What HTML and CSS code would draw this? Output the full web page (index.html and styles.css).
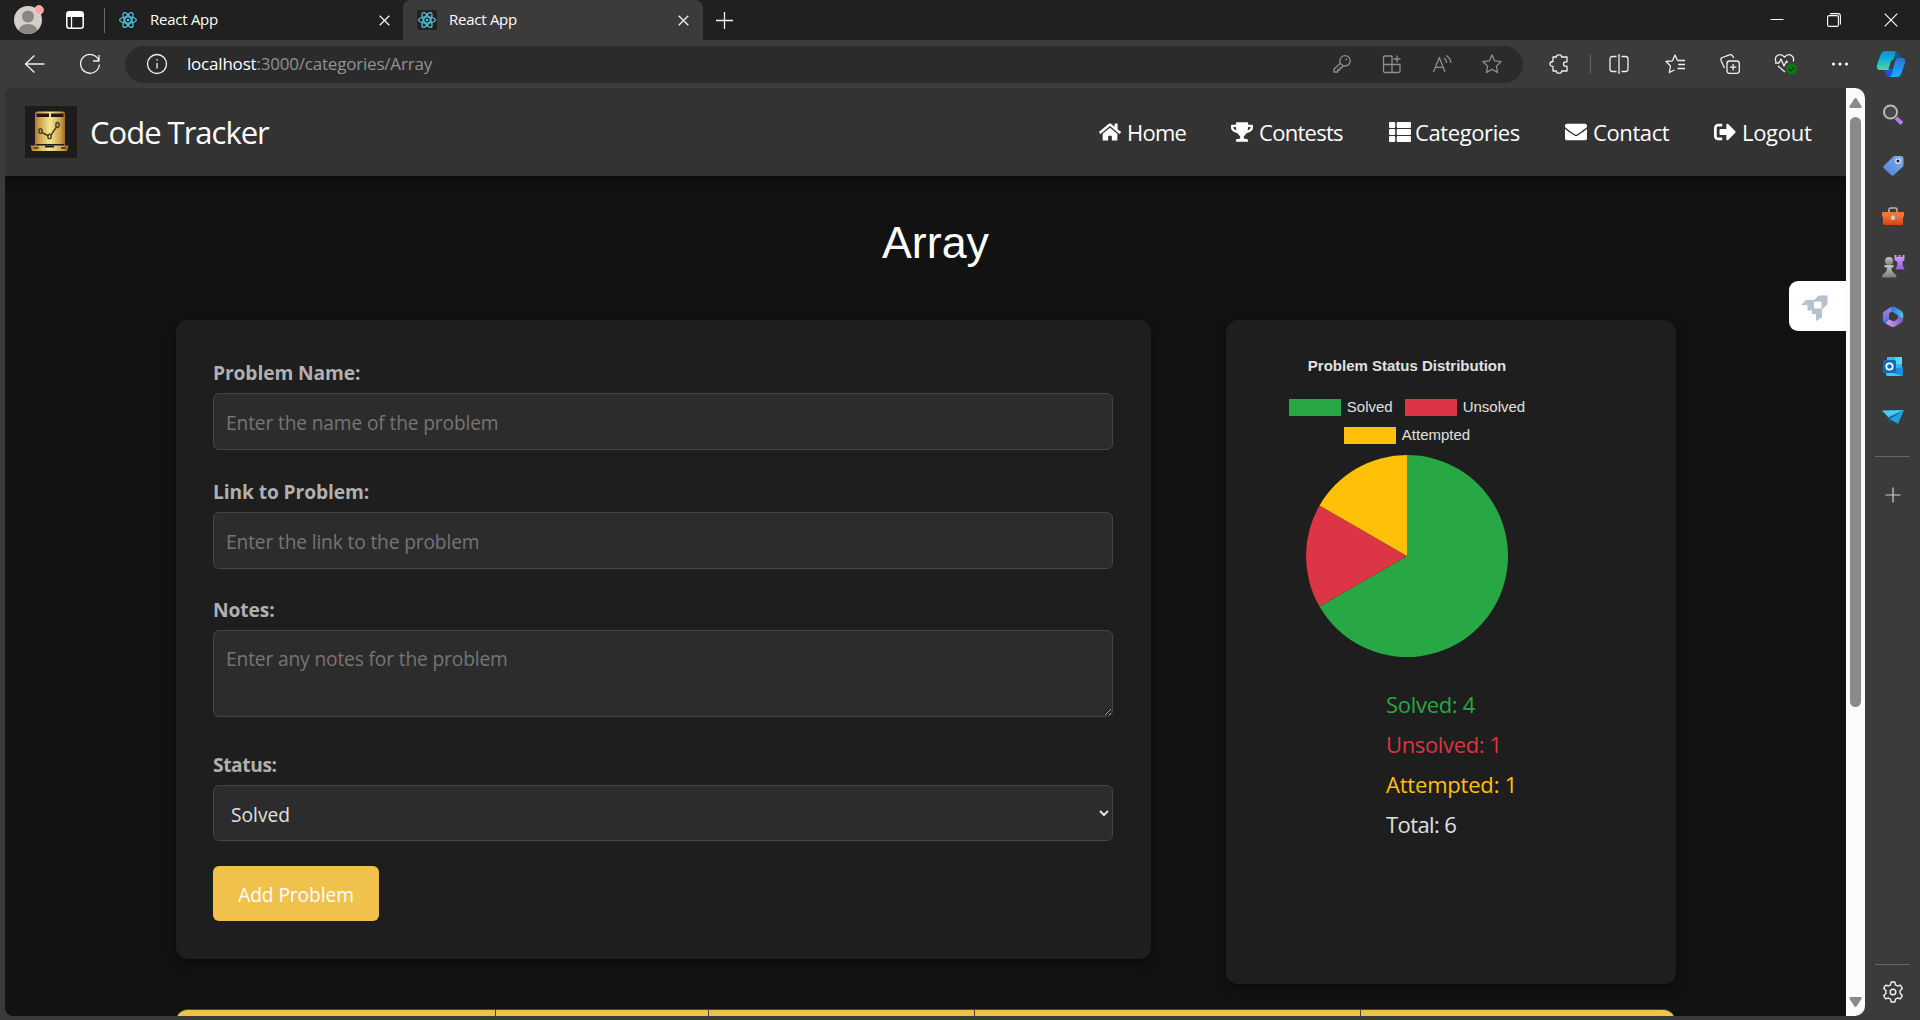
FILE: index.html
```html
<!DOCTYPE html>
<html lang="en">
<head>
<meta charset="utf-8">
<title>React App</title>
<link rel="stylesheet" href="styles.css">
</head>
<body>
<svg width="0" height="0" class="defs" aria-hidden="true">
  <defs>
    <linearGradient id="gold" x1="0" x2="1"><stop offset="0" stop-color="#a8782f"/><stop offset=".12" stop-color="#c99a45"/><stop offset=".5" stop-color="#f3e793"/><stop offset=".85" stop-color="#cfa04a"/><stop offset="1" stop-color="#9a6a26"/></linearGradient>
    <linearGradient id="cpA" x1="0" y1="0" x2="0" y2="1"><stop offset="0" stop-color="#0a8fd0"/><stop offset=".5" stop-color="#14b4d6"/><stop offset="1" stop-color="#5fd68b"/></linearGradient>
    <linearGradient id="cpB" x1="0" y1="0" x2="0" y2="1"><stop offset="0" stop-color="#2870d8"/><stop offset="1" stop-color="#12b4fb"/></linearGradient>
    <linearGradient id="tag" x1="1" y1="0" x2="0" y2="1"><stop offset="0" stop-color="#7fb0f3"/><stop offset="1" stop-color="#4f7fd9"/></linearGradient>
    <linearGradient id="box" x1="0" y1="0" x2="0" y2="1"><stop offset="0" stop-color="#f4743a"/><stop offset="1" stop-color="#d8420c"/></linearGradient>
    <linearGradient id="grey" x1="0" y1="0" x2="0" y2="1"><stop offset="0" stop-color="#c4c4c4"/><stop offset="1" stop-color="#7c7c7c"/></linearGradient>
    <linearGradient id="rook" x1="0" y1="0" x2="0" y2="1"><stop offset="0" stop-color="#d3a2fb"/><stop offset="1" stop-color="#8f5fd0"/></linearGradient>
    <linearGradient id="mA" x1="0" y1="0" x2="0" y2="1"><stop offset="0" stop-color="#b57ee6"/><stop offset="1" stop-color="#3b6fe0"/></linearGradient>
    <linearGradient id="mB" x1="0" y1="0" x2="1" y2="1"><stop offset="0" stop-color="#2b6ed6"/><stop offset="1" stop-color="#52d4f8"/></linearGradient>
    <linearGradient id="mC" x1="0" y1="0" x2="1" y2="0"><stop offset="0" stop-color="#d9a0f2"/><stop offset="1" stop-color="#7a55c8"/></linearGradient>
    <g id="react" fill="none" stroke="#53c1de" stroke-width="1.3"><circle cx="10" cy="10" r="1.3" fill="#53c1de" stroke="none"/><ellipse cx="10" cy="10" rx="8.4" ry="3.2"/><ellipse cx="10" cy="10" rx="8.4" ry="3.2" transform="rotate(60 10 10)"/><ellipse cx="10" cy="10" rx="8.4" ry="3.2" transform="rotate(120 10 10)"/></g>
  </defs>
</svg>

<div class="titlebar">
  <svg class="avatar" width="32" height="32" viewBox="0 0 32 32"><clipPath id="av"><circle cx="16" cy="16" r="14"/></clipPath><g clip-path="url(#av)"><rect width="32" height="32" fill="#d2cfcb"/><circle cx="16" cy="12.500" r="6" fill="#8b8682"/><ellipse cx="16" cy="27" rx="9.500" ry="7" fill="#8b8682"/></g><circle cx="27" cy="6" r="4.400" fill="#ffa3a3" stroke="#e9dcd9" stroke-width=".8"/></svg>
  <svg class="workspace" width="18" height="18" viewBox="0 0 18 18"><rect x=".8" y=".8" width="16.400" height="16.400" rx="2.500" fill="none" stroke="#fff" stroke-width="1.500"/><path d="M1 3q0-2 2-2h12q2 0 2 2v3H1z" fill="#fff"/><path d="M5.500 6v11" stroke="#fff" stroke-width="1.300"/></svg>
  <span class="title-divider"></span>
  <div class="tab">
    <svg width="20" height="20" viewBox="0 0 20 20"><use href="#react"/></svg>
    <span class="tab-name">React App</span>
    <svg width="11" height="11" viewBox="0 0 11 11"><path d="M.7.7l9.600 9.600M10.300.7L.7 10.300" stroke="#f2f2f2" stroke-width="1.300"/></svg>
  </div>
  <div class="tab tab-active">
    <svg width="20" height="20" viewBox="0 0 20 20"><rect width="20" height="20" rx="2" fill="#222"/><use href="#react"/></svg>
    <span class="tab-name">React App</span>
    <svg width="11" height="11" viewBox="0 0 11 11"><path d="M.7.7l9.600 9.600M10.300.7L.7 10.300" stroke="#f2f2f2" stroke-width="1.300"/></svg>
  </div>
  <svg class="new-tab" width="17" height="17" viewBox="0 0 17 17"><path d="M8.500 0v17M0 8.500h17" stroke="#f2f2f2" stroke-width="1.300"/></svg>
  <div class="window-controls">
    <svg width="14" height="14" viewBox="0 0 14 14"><path d="M.5 6.500h13" stroke="#fff"/></svg>
    <svg width="14" height="14" viewBox="0 0 14 14"><rect x=".6" y="2.600" width="10.800" height="10.800" rx="1.500" fill="none" stroke="#fff" stroke-width="1.100"/><path d="M3 .6h8q2.400 0 2.400 2.400v8.500" fill="none" stroke="#fff" stroke-width="1.100"/></svg>
    <svg width="14" height="14" viewBox="0 0 14 14"><path d="M.7.7l12.600 12.600M13.300.7L.7 13.300" stroke="#fff" stroke-width="1.100"/></svg>
  </div>
</div>

<div class="toolbar">
  <svg width="22" height="22" viewBox="0 0 22 22" class="ic"><path d="M20.500 11H1.500M10.500 2.500L1.500 11l9 8.500"/></svg>
  <svg width="22" height="22" viewBox="0 0 22 22" class="ic"><path d="M20 8a9.400 9.400 0 1 0 .4 3.500M20 2v6h-6"/></svg>
  <div class="address">
    <svg width="22" height="22" viewBox="0 0 22 22" class="ic"><circle cx="11" cy="11" r="9.500"/><path d="M11 10v5.500M11 6v1.600"/></svg>
    <span class="url"><b>localhost</b>:3000/categories/Array</span>
    <svg width="20" height="20" viewBox="0 0 20 20" class="ic dim"><circle cx="13" cy="6.800" r="5.200"/><path d="M8.200 9.200L2 15.300V18h3.600v-2h2.200v-2.200h2l1.100-1.900"/><circle cx="14.400" cy="5.400" r=".9" fill="#8f8f8f" stroke="none"/></svg>
    <svg width="20" height="20" viewBox="0 0 20 20" class="ic dim"><path d="M10 2H3q-1.500 0-1.500 1.500V17q0 1.500 1.500 1.500h13.500q1.500 0 1.500-1.500v-6.500H1.500M10 2v16.500M15 1.500v7M11.500 5h7"/></svg>
    <svg width="20" height="20" viewBox="0 0 20 20" class="ic dim"><path d="M1.500 18L7.300 3.500 13 18M3.300 13.300h7.900M12 4a6 6 0 0 1 2.600 5M14 1.500q4.600 2.500 4.800 7.500"/></svg>
    <svg width="20" height="20" viewBox="0 0 20 20" class="ic dim"><path d="M10 1l2.700 5.900 6.300.8-4.600 4.400 1.200 6.400L10 15.400l-5.600 3.100 1.200-6.400L1 7.700l6.300-.8z"/></svg>
  </div>
  <div class="tools">
    <svg width="20" height="20" viewBox="0 0 20 20" class="ic"><path d="M4 3h3.500q-.3-2.200 2.500-2.200T12.500 3H18v4.800h-1.500q-2 0-2 2.200t2 2.200H18V17h-5.500q.3 2.200-2.500 2.200T7.500 17H4v-4.500Q1 12.500 1 10t3-2.500z"/></svg>
    <span class="tool-divider"></span>
    <svg width="20" height="20" viewBox="0 0 20 20" class="ic"><path d="M7.500 2.500H3.500q-2.500 0-2.500 2.500v10q0 2.500 2.500 2.500h4M12.500 2.500h4q2.500 0 2.500 2.500v10q0 2.500-2.500 2.500h-4M10 0v20"/></svg>
    <svg width="20" height="20" viewBox="0 0 20 20" class="ic"><path d="M12.500 6.500L10 1 7.500 6.800 1 7.500l4.500 4.500-1.200 6.500L9.500 16M12.500 6.500H20M13 10.500h7M12.500 14.500H20"/></svg>
    <svg width="20" height="20" viewBox="0 0 20 20" class="ic"><rect x="7" y="7" width="12.300" height="12.300" rx="2.500"/><path d="M13.100 10v6.500M10 13.200h6.300M4.500 14L1 6.500Q.3 4.500 2.300 3.500L9.500.8q2-.5 3 1L13.700 4"/></svg>
    <svg width="24" height="22" viewBox="0 0 24 22" class="ic"><path d="M2 9Q.3 4.500 3.300 2.500 7 .3 10.500 4q3.500-3.700 7-1.500 3 2 1.700 6M1 10h4l2-4 3 7 2.500-5 1 2M4 13l7 6"/><circle cx="17.700" cy="15.800" r="5.500" fill="#0c7a10" stroke="none"/><path d="M14.800 16l2 2 3.700-4" stroke="#093f0a"/></svg>
    <svg width="18" height="6" viewBox="0 0 18 6"><g fill="#fff"><circle cx="2.500" cy="3" r="1.600"/><circle cx="9" cy="3" r="1.600"/><circle cx="15.500" cy="3" r="1.600"/></g></svg>
    <svg width="30" height="28" viewBox="0 0 30 28"><path d="M14 1h6q3 0 4 4l1 3h-7z" fill="#0b5a8f"/><path d="M8 20l2 4q1 3 4 3h3l4-13-7-2z" fill="#2350d8"/><path d="M9 1h9q2 0 1.500 2L15 17q-1 3-4 3H4q-4 0-3-5L4.500 5Q6 1 9 1z" fill="url(#cpA)"/><path d="M15.500 10h4l-3 9h-4z" fill="#3b3b3b"/><path d="M20 8h6q4 0 3 5l-3.500 10q-1.500 4-4.500 4h-8q2 0 3-3l3-13q1-3 3-3z" fill="url(#cpB)"/></svg>
  </div>
</div>

<div class="workarea">
  <div class="page">
    <header class="header">
      <svg width="52" height="52" viewBox="0 0 52 52"><rect width="52" height="52" fill="#1d1c1b"/><path d="M10 39V8q0-2.500 2.500-2.500h25Q40 5.500 40 8v31z" fill="url(#gold)"/><path d="M11.500 7.500h12.500V11H11.500zM26 7.500h12.500V11H26z" fill="#1d1810"/><path d="M11 38.500h28" stroke="#1d1c1b" stroke-width="1.200"/><path d="M5.500 39.500h38l-1.500 5.500H7z" fill="url(#gold)"/><path d="M20 39.500h9v2h-9z" fill="#1d1c1b"/><path d="M8.500 42h5M36 42h5" stroke="#6b4a18" stroke-width="1.800"/><g fill="none" stroke="#4a4227" stroke-width="1.500"><path d="M17 26.500l6.500 3.500M26 29l5.500-8"/><ellipse cx="15.500" cy="25" rx="1.600" ry="2.300"/><ellipse cx="24.500" cy="30.500" rx="1.700" ry="2.300"/><ellipse cx="32.500" cy="19" rx="1.600" ry="2.400"/></g></svg>
      <span class="brand">Code Tracker</span>
      <nav class="nav">
        <a class="nav-item nav-home"><svg width="22" height="20" viewBox="0 0 576 512"><path d="M280.370 148.260L96 300.110V464a16 16 0 0 0 16 16l112.060-.29a16 16 0 0 0 15.920-16V368a16 16 0 0 1 16-16h64a16 16 0 0 1 16 16v95.640a16 16 0 0 0 16 16.050L464 480a16 16 0 0 0 16-16V300L295.670 148.260a12.190 12.190 0 0 0-15.300 0zM571.600 251.470L488 182.560V44.050a12 12 0 0 0-12-12h-56a12 12 0 0 0-12 12v72.610L318.470 43a48 48 0 0 0-61 0L4.340 251.470a12 12 0 0 0-1.600 16.900l25.500 31A12 12 0 0 0 45.150 301l235.220-193.740a12.190 12.190 0 0 1 15.300 0L530.900 301a12 12 0 0 0 16.900-1.600l25.500-31a12 12 0 0 0-1.700-16.930z"/></svg><span>Home</span></a>
        <a class="nav-item nav-contests"><svg width="22" height="20" viewBox="0 0 576 512"><path d="M552 64H448V24c0-13.300-10.700-24-24-24H152c-13.300 0-24 10.700-24 24v40H24C10.700 64 0 74.700 0 88v56c0 35.700 22.500 72.400 61.900 100.700 31.500 22.700 69.800 37.100 110 41.700C203.300 338.500 240 360 240 360v72h-48c-35.300 0-64 20.700-64 56v12c0 6.600 5.400 12 12 12h296c6.600 0 12-5.400 12-12v-12c0-35.300-28.700-56-64-56h-48v-72s36.700-21.500 68.100-73.600c40.300-4.600 78.600-19 110-41.700 39.300-28.300 61.900-65 61.900-100.700V88c0-13.300-10.700-24-24-24zM99.300 192.800C74.900 175.200 64 155.600 64 144v-16h64.200c1 32.600 5.800 61.200 12.800 86.200-15.100-5.200-29.200-12.400-41.700-21.400zM512 144c0 16.100-17.700 36.100-35.300 48.800-12.500 9-26.700 16.200-41.800 21.400 7-25 11.800-53.600 12.800-86.200H512v16z"/></svg><span>Contests</span></a>
        <a class="nav-item nav-categories"><svg width="22" height="20" viewBox="0 0 22 20"><rect y="0" width="6.200" height="6" rx="1"/><rect x="7.700" y="0" width="14.300" height="6" rx="1"/><rect y="7" width="6.200" height="6" rx="1"/><rect x="7.700" y="7" width="14.300" height="6" rx="1"/><rect y="14" width="6.200" height="6" rx="1"/><rect x="7.700" y="14" width="14.300" height="6" rx="1"/></svg><span>Categories</span></a>
        <a class="nav-item nav-contact"><svg width="22" height="22" viewBox="0 0 512 512"><path d="M502.300 190.800c3.900-3.100 9.700-.2 9.700 4.700V400c0 26.500-21.500 48-48 48H48c-26.500 0-48-21.500-48-48V195.600c0-5 5.700-7.800 9.700-4.700 22.400 17.400 52.100 39.500 154.100 113.600 21.100 15.400 56.700 47.800 92.200 47.600 35.700.3 72-32.800 92.300-47.600 102-74.100 131.600-96.300 154-113.700zM256 320c23.200.4 56.600-29.200 73.400-41.400 132.700-96.300 142.800-104.700 173.400-128.700 5.800-4.500 9.200-11.500 9.200-18.900v-19c0-26.500-21.500-48-48-48H48c-26.500 0-48 21.500-48 48v19c0 7.400 3.400 14.300 9.200 18.900 30.600 23.900 40.700 32.400 173.400 128.700 16.800 12.200 50.200 41.800 73.400 41.400z"/></svg><span>Contact</span></a>
        <a class="nav-item nav-logout"><svg width="22" height="22" viewBox="0 0 512 512"><path d="M497 273L329 441c-15 15-41 4.500-41-17v-96H152c-13.300 0-24-10.700-24-24v-96c0-13.300 10.700-24 24-24h136V88c0-21.400 25.900-32 41-17l168 168c9.300 9.400 9.300 24.600 0 34zM192 436v-40c0-6.600-5.400-12-12-12H96c-17.700 0-32-14.300-32-32V160c0-17.700 14.300-32 32-32h84c6.600 0 12-5.400 12-12V76c0-6.600-5.400-12-12-12H96c-53 0-96 43-96 96v192c0 53 43 96 96 96h84c6.600 0 12-5.400 12-12z"/></svg><span>Logout</span></a>
      </nav>
    </header>

    <h1 class="heading">Array</h1>

    <main class="content">
      <form class="card form-card">
        <label class="label" for="name">Problem Name:</label>
        <input class="field" id="name" placeholder="Enter the name of the problem">
        <label class="label" for="link">Link to Problem:</label>
        <input class="field" id="link" placeholder="Enter the link to the problem">
        <label class="label" for="notes">Notes:</label>
        <textarea class="field notes" id="notes" placeholder="Enter any notes for the problem"></textarea>
        <label class="label label-status" for="status">Status:</label>
        <select class="field status" id="status"><option>Solved</option><option>Unsolved</option><option>Attempted</option></select>
        <button class="submit" type="button">Add Problem</button>
      </form>

      <section class="card stats-card">
        <div class="chart">
          <div class="chart-title">Problem Status Distribution</div>
          <div class="legend">
            <span class="key"><i class="swatch green"></i>Solved</span>
            <span class="key"><i class="swatch red"></i>Unsolved</span>
          </div>
          <div class="legend">
            <span class="key"><i class="swatch yellow"></i>Attempted</span>
          </div>
          <svg class="pie" width="204" height="204" viewBox="-102 -102 204 204"><path d="M0 0V-101A101 101 0 1 1-87.470 50.500z" fill="#28a745"/><path d="M0 0L-87.470 50.500A101 101 0 0 1-87.470-50.500z" fill="#dc3545"/><path d="M0 0L-87.470-50.500A101 101 0 0 1 0-101z" fill="#ffc107"/></svg>
        </div>
        <div class="totals">
          <p class="t-green">Solved: 4</p>
          <p class="t-red">Unsolved: 1</p>
          <p class="t-yellow">Attempted: 1</p>
          <p class="t-total">Total: 6</p>
        </div>
      </section>
    </main>

    <div class="table-head"><span></span><span></span><span></span><span></span><span></span></div>

    <div class="side-button"><svg width="26" height="26" viewBox="0 0 26 26"><path d="M0 9l4-4h8l5-4.500h8.500V9L20 14.500V22l-4.500 3.500H14V19h-4v-3.500H5.500V10H0z" fill="#b5c1cd"/><rect x="12" y="6.500" width="7.500" height="7" rx="1" fill="#fff"/></svg></div>
  </div>

  <div class="scrollbar">
    <svg width="13" height="10" viewBox="0 0 13 10"><path d="M6.500 0q.7 0 1.200.7l4.800 7.600q.5 1.700-1 1.700H1.500q-1.500 0-1-1.700L5.300.7Q5.800 0 6.500 0z" fill="#8a8a8a"/></svg>
    <span class="thumb"></span>
    <svg class="down" width="13" height="10" viewBox="0 0 13 10"><path d="M6.500 10q.7 0 1.200-.7l4.800-7.600Q13 0 11.500 0H1.500Q0 0 .5 1.700l4.800 7.600q.5.7 1.200.7z" fill="#8a8a8a"/></svg>
  </div>

  <aside class="sidebar">
    <svg width="22" height="22" viewBox="0 0 22 22"><path d="M14 14l6 5.500" stroke="#b67df0" stroke-width="4"/><circle cx="8.500" cy="8" r="6.600" fill="#45474a" stroke="#b9b9b9" stroke-width="2"/></svg>
    <svg width="22" height="22" viewBox="0 0 22 22"><path d="M12 2h7q2.500 0 2.500 2.500V12L12 21q-1.500 1.500-3 0l-7-6.500q-1.500-1.500 0-3z" fill="url(#tag)"/><circle cx="16" cy="7" r="2.200" fill="#223" stroke="#e6e6e6" stroke-width="1.300"/></svg>
    <svg width="24" height="22" viewBox="0 0 24 22"><path d="M8 9V5.500Q8 4 9.500 4h5Q16 4 16 5.500V9" fill="none" stroke="#b9b9b9" stroke-width="1.500"/><rect x="1" y="8" width="22" height="5" rx="1" fill="#f4743a"/><rect x="2" y="11.500" width="20" height="9.500" rx="1.500" fill="url(#box)"/><rect x="10" y="11.500" width="4" height="4.500" rx="1.500" fill="#c9c9c9"/></svg>
    <svg width="24" height="24" viewBox="0 0 24 24"><path d="M13.500 1h2v2h2V1h2v2h2V1H23.500v5l-2 2 .5 4.500q1.500 1 1.500 3h-9q0-2 1.500-3l.5-4.500-3-2z" fill="url(#rook)"/><g fill="url(#grey)"><circle cx="8" cy="7" r="4"/><path d="M3.500 11h9v2.500h-2q0 4 2 5v.5q3 1 3 4.500H1Q1 20 4 19v-.5q2-1 2-5H3.500z"/></g></svg>
    <svg width="22" height="22" viewBox="0 0 22 22"><path d="M9 1L2 5.500Q.8 6.500.8 8v6q0 1.500 1.200 2.500L7 19V9q0-2 2-3l4-2z" fill="url(#mA)"/><path d="M9 1q2-1 4 0l6.500 4q1.700 1 1.700 3v5l-5.500-4L9 5z" fill="url(#mB)"/><path d="M21.200 13q0 2.500-1.500 3.500L13 20.500q-2 1-4 0l-5-3 3-4 5 2 4-3V9z" fill="url(#mC)"/></svg>
    <svg width="22" height="22" viewBox="0 0 22 22"><rect x="5" y="1" width="15" height="15" fill="#35b8f1"/><path d="M13 1h7v7h-7z" fill="#55d5fb"/><path d="M4 14l17-3v7q0 2-2 2H6q-2 0-2-2z" fill="#1a8fe0"/><path d="M4 15l17 5H6q-2 0-2-2z" fill="#41c6f6"/><rect x="1" y="4" width="13" height="13" rx="1.500" fill="#0f6cbd"/><circle cx="7.500" cy="10.500" r="3.200" fill="none" stroke="#fff" stroke-width="1.700"/></svg>
    <svg width="24" height="22" viewBox="0 0 24 22"><path d="M1 4.500l22-.5-6.500 5L8 12z" fill="#4cc8f5"/><path d="M23 4L8 11l-.5 5.500L11 13z" fill="#0a5fa8"/><path d="M23 4l-6 14-8.500-5z" fill="#249de0"/></svg>
    <span class="side-divider"></span>
    <svg class="add" width="16" height="16" viewBox="0 0 16 16"><path d="M8 .5v15M.5 8h15" stroke="#d0d0d0" stroke-width="1.200"/></svg>
    <span class="side-divider bottom"></span>
    <svg class="gear" width="22" height="22" viewBox="0 0 22 22"><g fill="none" stroke="#f0f0f0" stroke-width="1.400" stroke-linejoin="round"><circle cx="11" cy="11" r="2.800"/><path d="M9.200 1h3.600l.7 2.900 2 1.100 2.800-.9 2 3.300-2.200 2.100v2.900l2.200 2.200-2 3.300-2.800-.9-2 1.100-.7 2.900H9.200l-.7-2.900-2-1.100-2.800.9-2-3.300 2.200-2.200V9.500L1.700 7.400l2-3.300 2.800.9 2-1.100z"/></g></svg>
  </aside>
</div>
</body>
</html>
```
FILE: styles.css
```css
* { box-sizing: border-box; }

body {
  margin: 0;
  width: 1920px;
  height: 1020px;
  display: flex;
  flex-direction: column;
  overflow: hidden;
  background: #3b3b3b;
  font-family: "Open Sans", "Noto Sans", sans-serif;
}

.defs { position: absolute; }
svg { display: block; flex: none; }

/* Window title bar */
.titlebar {
  height: 40px;
  flex: none;
  display: flex;
  align-items: center;
  background: #202020;
  color: #fff;
}
.avatar { margin-left: 12px; }
.workspace { margin-left: 22px; }
.title-divider { width: 1px; height: 25px; margin-left: 20px; background: #6a6a6a; }
.tab {
  width: 298px;
  height: 40px;
  padding: 0 13px;
  display: flex;
  align-items: center;
  font-size: 15px;
  letter-spacing: -0.26px;
}
.tab-name { flex: 1; margin: 0 0 2px 12px; }
.tab-active {
  width: 300px;
  padding: 0 14px;
  border-radius: 8px 8px 0 0;
  background: #3b3b3b;
}
.new-tab { margin-left: 13px; }
.window-controls { margin: -1px 22px 0 auto; display: flex; gap: 43px; }

/* Browser toolbar */
.toolbar {
  height: 48px;
  flex: none;
  display: flex;
  align-items: center;
  padding-left: 24px;
  background: #3b3b3b;
}
.ic { fill: none; stroke: #f0f0f0; stroke-width: 1.3; stroke-linejoin: round; }
.ic.dim { stroke: #8f8f8f; }
.toolbar > .ic + .ic { margin-left: 33px; }
.address {
  width: 1398px;
  flex: 0 0 1398px;
  height: 37px;
  margin-left: 24px;
  padding: 0 21px;
  display: flex;
  align-items: center;
  gap: 30px;
  border-radius: 19px;
  background: #2b2b2b;
}
.url { flex: 1; margin: 0 0 2px -11px; font-size: 17px; letter-spacing: -0.2px; color: #929292; }
.url b { font-weight: 400; color: #fff; }
.tools {
  flex: none;
  display: grid;
  grid-template-columns: 52px 10px 48px 64px 46px 66px 42px 59px;
  align-items: center;
  justify-items: center;
  margin-left: 10px;
}
.tool-divider { width: 1px; height: 20px; background: #666; }

/* Page, scrollbar and sidebar */
.workarea { height: 928px; display: flex; padding-left: 5px; }
.page {
  position: relative;
  width: 1841px;
  overflow: hidden;
  border-radius: 8px 0 0 8px;
  background: #121212;
}
.header {
  height: 88px;
  display: flex;
  align-items: center;
  padding-left: 20px;
  background: #333;
  color: #fff;
  box-shadow: 0 2px 10px rgba(0, 0, 0, 0.5);
}
.brand { margin-left: 13px; font-size: 31px; letter-spacing: -1px; }
.nav { display: flex; margin-left: auto; font-size: 22px; }
.nav-item { display: flex; align-items: center; gap: 5px; }
.nav-item svg { fill: #fff; }
.nav-item span { margin-bottom: 1px; }
.nav-home { width: 132px; gap: 6px; letter-spacing: -0.77px; }
.nav-contests { width: 158px; gap: 6px; letter-spacing: -0.73px; }
.nav-categories { width: 176px; gap: 4px; letter-spacing: -0.4px; }
.nav-contact { width: 149px; gap: 6px; letter-spacing: -0.4px; }
.nav-logout { width: 132px; gap: 6px; letter-spacing: -0.3px; }

.heading {
  margin: 41px 0 52px;
  padding-left: 20px;
  color: #fff;
  font: 400 44.8px/51px "Liberation Sans", Arial, sans-serif;
  text-align: center;
}
.content {
  display: grid;
  grid-template-columns: 975px 450px;
  column-gap: 75px;
  align-items: start;
  padding-left: 171px;
}
.card {
  border-radius: 12px;
  background: #1e1e1e;
  box-shadow: 0 5px 12px rgba(0, 0, 0, 0.4);
}

/* Problem form */
.form-card {
  height: 639px;
  padding: 40px 38px 0 37px;
  display: flex;
  flex-direction: column;
}
.label {
  margin-bottom: 7px;
  font-size: 19.2px;
  font-weight: 700;
  line-height: 26px;
  letter-spacing: -0.1px;
  color: #b0b0b0;
}
.label-status { letter-spacing: -0.4px; }
.field {
  width: 100%;
  height: 57px;
  margin: 0 0 29px;
  padding: 2px 12px 0;
  border: 1px solid #444;
  border-radius: 6px;
  outline: 0;
  background: #2c2c2c;
  color: #e0e0e0;
  font: 19.2px/26px "Open Sans", "Noto Sans", sans-serif;
  letter-spacing: -0.15px;
}
.field::placeholder { color: #757575; }
#link { margin-bottom: 28px; padding-top: 1px; }
.notes { height: 87px; margin-bottom: 35px; padding-top: 15px; resize: vertical; }
.status {
  height: 56px;
  margin-bottom: 25px;
  padding: 2px 14px 0 13px;
  letter-spacing: 0;
}
.submit {
  width: 166px;
  height: 55px;
  padding: 2px 0 0;
  border: 0;
  border-radius: 6px;
  background: #f0c14b;
  color: #fff;
  font: 19.2px "Open Sans", "Noto Sans", sans-serif;
  letter-spacing: -0.09px;
}

/* Status chart */
.stats-card { height: 664px; padding-top: 37px; }
.chart {
  width: 264px;
  margin-left: 49px;
  display: flex;
  flex-direction: column;
  align-items: center;
  font: 15px/18px "Liberation Sans", Arial, sans-serif;
  color: #e0e0e0;
}
.chart-title { margin-bottom: 18px; font-weight: 700; }
.legend { height: 28px; display: flex; align-items: center; gap: 12px; }
.key { display: flex; align-items: center; }
.swatch { width: 52px; height: 17px; margin-right: 6px; }
.green { background: #28a745; }
.red { background: #dc3545; }
.yellow { background: #ffc107; }
.pie { margin-top: 5px; }
.totals { margin: 26px 0 0 160px; font-size: 22px; line-height: 40px; }
.totals p { margin: 0; }
.t-green { color: #28a745; letter-spacing: -0.3px; }
.t-red { color: #dc3545; letter-spacing: -0.35px; }
.t-yellow { color: #ffc107; letter-spacing: -0.2px; }
.t-total { color: #e0e0e0; letter-spacing: -0.6px; }

/* Problem table header */
.table-head {
  width: 1499px;
  height: 60px;
  margin: 25px 0 0 171px;
  display: grid;
  grid-template-columns: 319px 213px 266px 386px 315px;
  overflow: hidden;
  border-top: 1px solid #444;
  border-radius: 12px 12px 0 0;
  background: #f0c14b;
}
.table-head span + span { border-left: 1px solid #444; }

.side-button {
  position: absolute;
  top: 193px;
  right: 0;
  width: 57px;
  height: 50px;
  padding: 14px 0 0 13px;
  border-radius: 9px 0 0 9px;
  background: #fff;
}

.scrollbar {
  width: 19px;
  padding: 10px 0 9px;
  display: flex;
  flex-direction: column;
  align-items: center;
  border-radius: 0 10px 10px 0;
  background: #fcfcfc;
}
.thumb { width: 11px; height: 590px; margin-top: 9px; border-radius: 6px; background: #8a8a8a; }
.down { margin-top: auto; }

.sidebar {
  width: 55px;
  padding-top: 16px;
  display: flex;
  flex-direction: column;
  align-items: center;
  gap: 28px;
}
.side-divider { width: 35px; height: 1px; background: #666; }
.add { margin-top: 2px; }
.side-divider.bottom { margin-top: auto; }
.gear { margin: -12px 0 13px; }
```
